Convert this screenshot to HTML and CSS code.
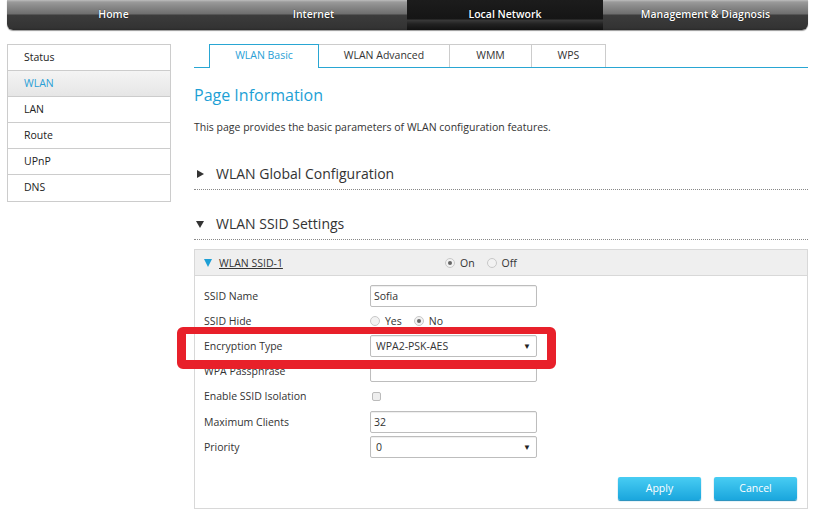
FILE: index.html
```html
<!DOCTYPE html>
<html>
<head>
<meta charset="utf-8">
<link rel="stylesheet" href="styles.css">
</head>
<body>
<div class="topnav">
  <div class="nav-item">Home</div>
  <div class="nav-item">Internet</div>
  <div class="nav-item active">Local Network</div>
  <div class="nav-item">Management &amp; Diagnosis</div>
</div>
<div class="main">
  <ul class="sidebar">
    <li>Status</li>
    <li class="sel">WLAN</li>
    <li>LAN</li>
    <li>Route</li>
    <li>UPnP</li>
    <li>DNS</li>
  </ul>
  <div class="content">
    <div class="tabs">
      <div class="tab active t1">WLAN Basic</div>
      <div class="tab t2">WLAN Advanced</div>
      <div class="tab t3">WMM</div>
      <div class="tab t4">WPS</div>
    </div>
    <h1 class="title">Page Information</h1>
    <p class="desc">This page provides the basic parameters of WLAN configuration features.</p>
    <div class="section first"><span class="tri-r"></span>WLAN Global Configuration</div>
    <div class="section"><span class="tri-d"></span>WLAN SSID Settings</div>
    <div class="panel">
      <div class="panel-head">
        <div class="ph-left"><span class="tri-blue"></span><span class="ssid-link">WLAN SSID-1</span></div>
        <div class="ph-radios">
          <span class="radio on"></span><span class="rlabel">On</span>
          <span class="radio"></span><span class="rlabel">Off</span>
        </div>
      </div>
      <div class="panel-body">
        <div class="row"><div class="lbl">SSID Name</div><div class="input">Sofia</div></div>
        <div class="row"><div class="lbl">SSID Hide</div>
          <div class="radios"><span class="radio"></span><span class="rlabel">Yes</span><span class="radio on"></span><span class="rlabel">No</span></div>
        </div>
        <div class="row"><div class="lbl">Encryption Type</div><div class="input select">WPA2-PSK-AES<span class="arrow">&#9660;</span></div></div>
        <div class="row"><div class="lbl">WPA Passphrase</div><div class="input"></div></div>
        <div class="row tall"><div class="lbl">Enable SSID Isolation</div><span class="checkbox"></span></div>
        <div class="row"><div class="lbl">Maximum Clients</div><div class="input">32</div></div>
        <div class="row"><div class="lbl">Priority</div><div class="input select">0<span class="arrow">&#9660;</span></div></div>
        <div class="buttons">
          <div class="btn">Apply</div>
          <div class="btn">Cancel</div>
        </div>
      </div>
    </div>
  </div>
</div>
<div class="highlight"></div>
</body>
</html>
```

FILE: styles.css
```css
* { box-sizing: border-box; }
body {
  margin: 0;
  font-family: "Open Sans", "Noto Sans", sans-serif;
  font-size: 10.5px;
  color: #333;
  background: #fff;
  width: 823px;
  height: 511px;
  overflow: hidden;
  position: relative;
}
.topnav {
  display: flex;
  margin: 0 15px 0 7px;
  height: 30px;
  border-radius: 0 0 6px 6px;
  overflow: hidden;
  background: linear-gradient(#bdbdbd 0, #9a9a9a 2px, #8a8a8a 6px, #6e6e6e 14px, #3c3c3c 15px, #333 28px, #2a2a2a 30px);
  box-shadow: 0 1px 1px #999;
}
.nav-item {
  text-align: center;
  color: #fff;
  font-size: 10.5px;
  font-weight: 600;
  line-height: 29px;
  text-shadow: 0 0 1px #000;
}
.nav-item:nth-child(1) { width: 213px; }
.nav-item:nth-child(2) { width: 187px; }
.nav-item:nth-child(3) { width: 196px; }
.nav-item:nth-child(4) { flex: 1; }
.nav-item.active {
  background: linear-gradient(#1c1c1c 0, #151515 19px, #3a3a3a 20px, #222 24px, #111 30px);
}
.main {
  display: flex;
  margin-top: 14px;
  padding-left: 7px;
}
.sidebar {
  list-style: none;
  margin: 0;
  padding: 0;
  width: 164px;
  border: 1px solid #ccc;
  align-self: flex-start;
}
.sidebar li {
  height: 26px;
  line-height: 24px;
  padding-left: 16px;
  border-bottom: 1px solid #ccc;
  color: #222;
}
.sidebar li:last-child { border-bottom: none; }
.sidebar li.sel {
  background: linear-gradient(#f4f4f4, #e6e6e6);
  color: #2a9fd6;
}
.content {
  margin-left: 23px;
  width: 614px;
}
.tabs {
  display: flex;
  padding-left: 15px;
  height: 24px;
  border-bottom: 1px solid #29a6d3;
}
.tab {
  height: 23px;
  line-height: 21px;
  text-align: center;
  border: 1px solid #ccc;
  border-left: none;
  border-bottom: none;
  color: #333;
  background: #fff;
}
.tab.t1 { width: 110px; }
.tab.t2 { width: 131px; }
.tab.t3 { width: 82px; }
.tab.t4 { width: 74px; }
.tab.active {
  border: 1px solid #29a6d3;
  border-bottom: none;
  height: 24px;
  color: #2a9fd6;
}
.title {
  margin: 16px 0 0;
  font-size: 16px;
  font-weight: 400;
  color: #1d9fd5;
  line-height: 22px;
}
.desc {
  margin: 14px 0 0;
  line-height: 14px;
}
.section {
  height: 26px;
  font-size: 14px;
  color: #333;
  line-height: 20px;
  border-bottom: 1px dotted #888;
  margin-top: 24px;
  display: flex;
  align-items: flex-start;
}
.section.first { margin-top: 30px; }
.tri-r {
  width: 0; height: 0;
  border-left: 7px solid #333;
  border-top: 4px solid transparent;
  border-bottom: 4px solid transparent;
  margin: 6px 12px 0 3px;
}
.tri-d {
  width: 0; height: 0;
  border-top: 7px solid #333;
  border-left: 4px solid transparent;
  border-right: 4px solid transparent;
  margin: 7px 12px 0 2px;
}
.panel {
  margin-top: 9px;
  border: 1px solid #d8d8d8;
  height: 260px;
}
.panel-head {
  height: 26px;
  background: #efefef;
  border-bottom: 1px solid #d8d8d8;
  display: flex;
  align-items: center;
  padding-left: 9px;
}
.ph-left { width: 241px; display: flex; align-items: center; }
.tri-blue {
  width: 0; height: 0;
  border-top: 8px solid #1d9fd5;
  border-left: 4.5px solid transparent;
  border-right: 4.5px solid transparent;
  margin-right: 7px;
}
.ssid-link { text-decoration: underline; color: #333; }
.ph-radios, .radios { display: flex; align-items: center; }
.radio {
  width: 10px; height: 10px;
  border-radius: 50%;
  border: 1px solid #c8c8c8;
  background: #f2f2f2;
  position: relative;
  margin-right: 5px;
}
.radio.on::after {
  content: "";
  position: absolute;
  left: 2px; top: 2px;
  width: 4px; height: 4px;
  border-radius: 50%;
  background: #666;
}
.rlabel { margin-right: 12px; }
.panel-body { padding: 7px 10px 0 9px; }
.row {
  height: 25px;
  display: flex;
  align-items: center;
}
.row.tall { height: 26px; }
.lbl { width: 166px; }
.input {
  width: 167px;
  height: 22px;
  border: 1px solid #bdbdbd;
  border-radius: 2px;
  line-height: 20px;
  padding-left: 3px;
  position: relative;
  box-shadow: inset 0 1px 1px #eee;
}
.select { padding-left: 5px; }
.arrow {
  position: absolute;
  right: 5px;
  top: 0;
  font-size: 8px;
  color: #222;
}
.checkbox {
  width: 9px; height: 9px;
  border: 1px solid #bbb;
  border-radius: 2px;
  background: #eee;
  margin-left: 2px;
}
.buttons {
  display: flex;
  justify-content: flex-end;
  gap: 13px;
  margin-top: 18px;
}
.btn {
  width: 83px;
  height: 23px;
  line-height: 23px;
  text-align: center;
  color: #fff;
  border-radius: 2px;
  background: linear-gradient(#48cdf3, #1aa6dd);
  box-shadow: 0 1px 1px #1989b8;
}
.highlight {
  position: absolute;
  left: 177px;
  top: 327px;
  width: 379px;
  height: 42px;
  border: 9px solid #e8202a;
  border-top-width: 7px;
  border-radius: 6px;
}
```
